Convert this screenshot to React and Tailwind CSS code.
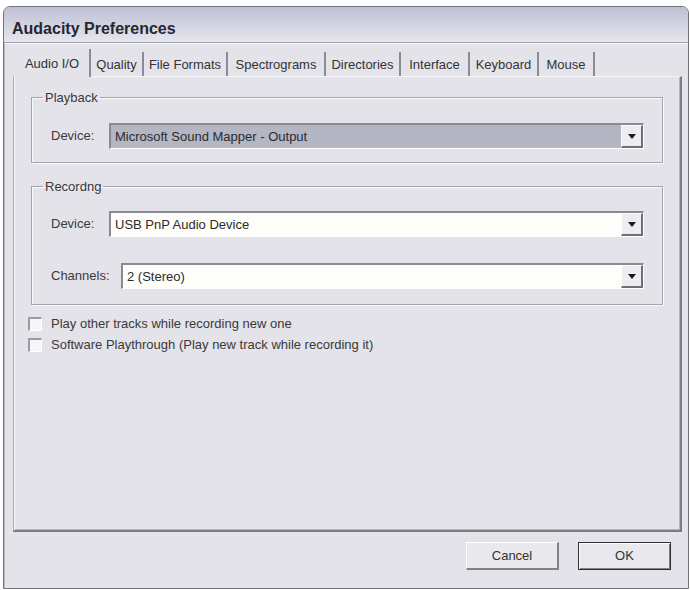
import React from "react";

const tabs = [
  { label: "Audio I/O", w: "w-[76px]", active: true },
  { label: "Quality", w: "w-[53px]" },
  { label: "File Formats", w: "w-[84px]" },
  { label: "Spectrograms", w: "w-[98px]" },
  { label: "Directories", w: "w-[75px]" },
  { label: "Interface", w: "w-[69px]" },
  { label: "Keyboard", w: "w-[69px]" },
  { label: "Mouse", w: "w-[56px]" },
];

function Arrow() {
  return (
    <div className="w-[22px] h-full shrink-0 bg-[#ecedf1] border-t border-l border-t-white border-l-white border-b-2 border-r-2 border-b-[#6f6f7a] border-r-[#6f6f7a] flex items-center justify-center">
      <svg width="8" height="5" viewBox="0 0 8 5">
        <path d="M0 0 H8 L4 5 Z" fill="#1a1a1a" />
      </svg>
    </div>
  );
}

function Combo({ text, dim }) {
  return (
    <div
      className={`flex-1 h-[26px] flex items-stretch border-t-2 border-l-2 border-t-[#8a8a94] border-l-[#8a8a94] border-b border-r border-b-white border-r-white ${
        dim ? "bg-[#b4b6c3]" : "bg-[#fdfdf9]"
      }`}
    >
      <div className="flex-1 flex items-center pl-[4px] text-[13px] text-[#2c2c2c] leading-none">
        {text}
      </div>
      <Arrow />
    </div>
  );
}

function Row({ label, labelW, text, dim, mt }) {
  return (
    <div className={`flex items-center pl-[19px] pr-[18px] ${mt}`}>
      <span className={`${labelW} shrink-0 text-[13px] text-[#3a3a3a]`}>{label}</span>
      <Combo text={text} dim={dim} />
    </div>
  );
}

function Group({ title, children, className }) {
  return (
    <fieldset
      className={`mx-[17px] border border-[#a3a3ad] shadow-[inset_1px_1px_0_#fafafc,1px_1px_0_#fafafc] ${className}`}
    >
      <legend className="ml-[11px] px-[2px] text-[13px] leading-[15px] text-[#3a3a3a]">
        {title}
      </legend>
      {children}
    </fieldset>
  );
}

function Check({ label }) {
  return (
    <div className="flex items-center h-[21px]">
      <div className="w-[14px] h-[14px] shrink-0 bg-[#f6f6f8] border-t-2 border-l-2 border-t-[#9a9aa4] border-l-[#9a9aa4] border-b border-r border-b-white border-r-white" />
      <span className="ml-[9px] text-[13px] text-[#3a3a3a]">{label}</span>
    </div>
  );
}

export default function App() {
  return (
    <div className="w-[690px] h-[590px] bg-white pt-[6px] pl-[3px] font-['Liberation_Sans',Arial,sans-serif] overflow-hidden">
      <div className="w-[686px] h-[583px] flex flex-col border border-[#727280] rounded-t-[7px] bg-[#e3e3e9] overflow-hidden">
        <div className="h-[36px] shrink-0 bg-gradient-to-b from-[#bfc0d2] via-[#d2d3e1] to-[#e6e6ef] border-b border-[#9d9dab] shadow-[0_1px_0_#fbfbfd] flex items-center pl-[8px] pt-[9px]">
          <span className="text-[16px] font-bold text-[#262630] leading-none">
            Audacity Preferences
          </span>
        </div>
        <div className="flex-1 flex flex-col pl-[8px] pr-[6px] pt-[6px] border-l border-[#b9b9c4]">
          <div className="flex h-[27px] pl-[2px] relative z-10">
            {tabs.map((t) => (
              <div
                key={t.label}
                className={`${t.w} shrink-0 flex items-center justify-center text-[13px] text-[#333] border-r-2 border-r-[#8b8b95] ${
                  t.active ? "h-[28px] bg-[#e3e3e9]" : "mt-[3px] h-[24px]"
                }`}
              >
                <span className={t.active ? "mt-[1px]" : "mt-[2px]"}>{t.label}</span>
              </div>
            ))}
          </div>
          <div className="h-[456px] flex flex-col border-t border-l border-t-[#f7f7fa] border-l-[#a9a9b3] border-r-2 border-b-2 border-r-[#7c7c87] border-b-[#7c7c87] shadow-[inset_1px_0_0_#f7f7fa,inset_-1px_-1px_0_#b5b5bf]">
            <Group title="Playback" className="mt-[13px] pb-[13px]">
              <Row label="Device:" labelW="w-[58px]" text="Microsoft Sound Mapper - Output" dim mt="mt-[18px]" />
            </Group>
            <Group title="Recordng" className="mt-[16px] pb-[15px]">
              <Row label="Device:" labelW="w-[58px]" text="USB PnP Audio Device" mt="mt-[17px]" />
              <Row label="Channels:" labelW="w-[70px]" text="2 (Stereo)" mt="mt-[26px]" />
            </Group>
            <div className="mt-[8px] ml-[14px] flex flex-col">
              <Check label="Play other tracks while recording new one" />
              <Check label="Software Playthrough (Play new track while recording it)" />
            </div>
          </div>
          <div className="flex justify-end gap-[19px] mt-[10px] pr-[11px]">
            <button className="w-[93px] h-[28px] bg-[#e8e8ed] text-[13px] text-[#333] border-t border-l border-t-white border-l-white border-b-2 border-r-2 border-b-[#808089] border-r-[#808089]">
              Cancel
            </button>
            <button className="w-[93px] h-[28px] bg-[#e8e8ed] text-[13px] text-[#333] border border-[#2e2e36] shadow-[inset_1px_1px_0_white,inset_-1px_-1px_0_#808089]">
              OK
            </button>
          </div>
        </div>
      </div>
    </div>
  );
}
